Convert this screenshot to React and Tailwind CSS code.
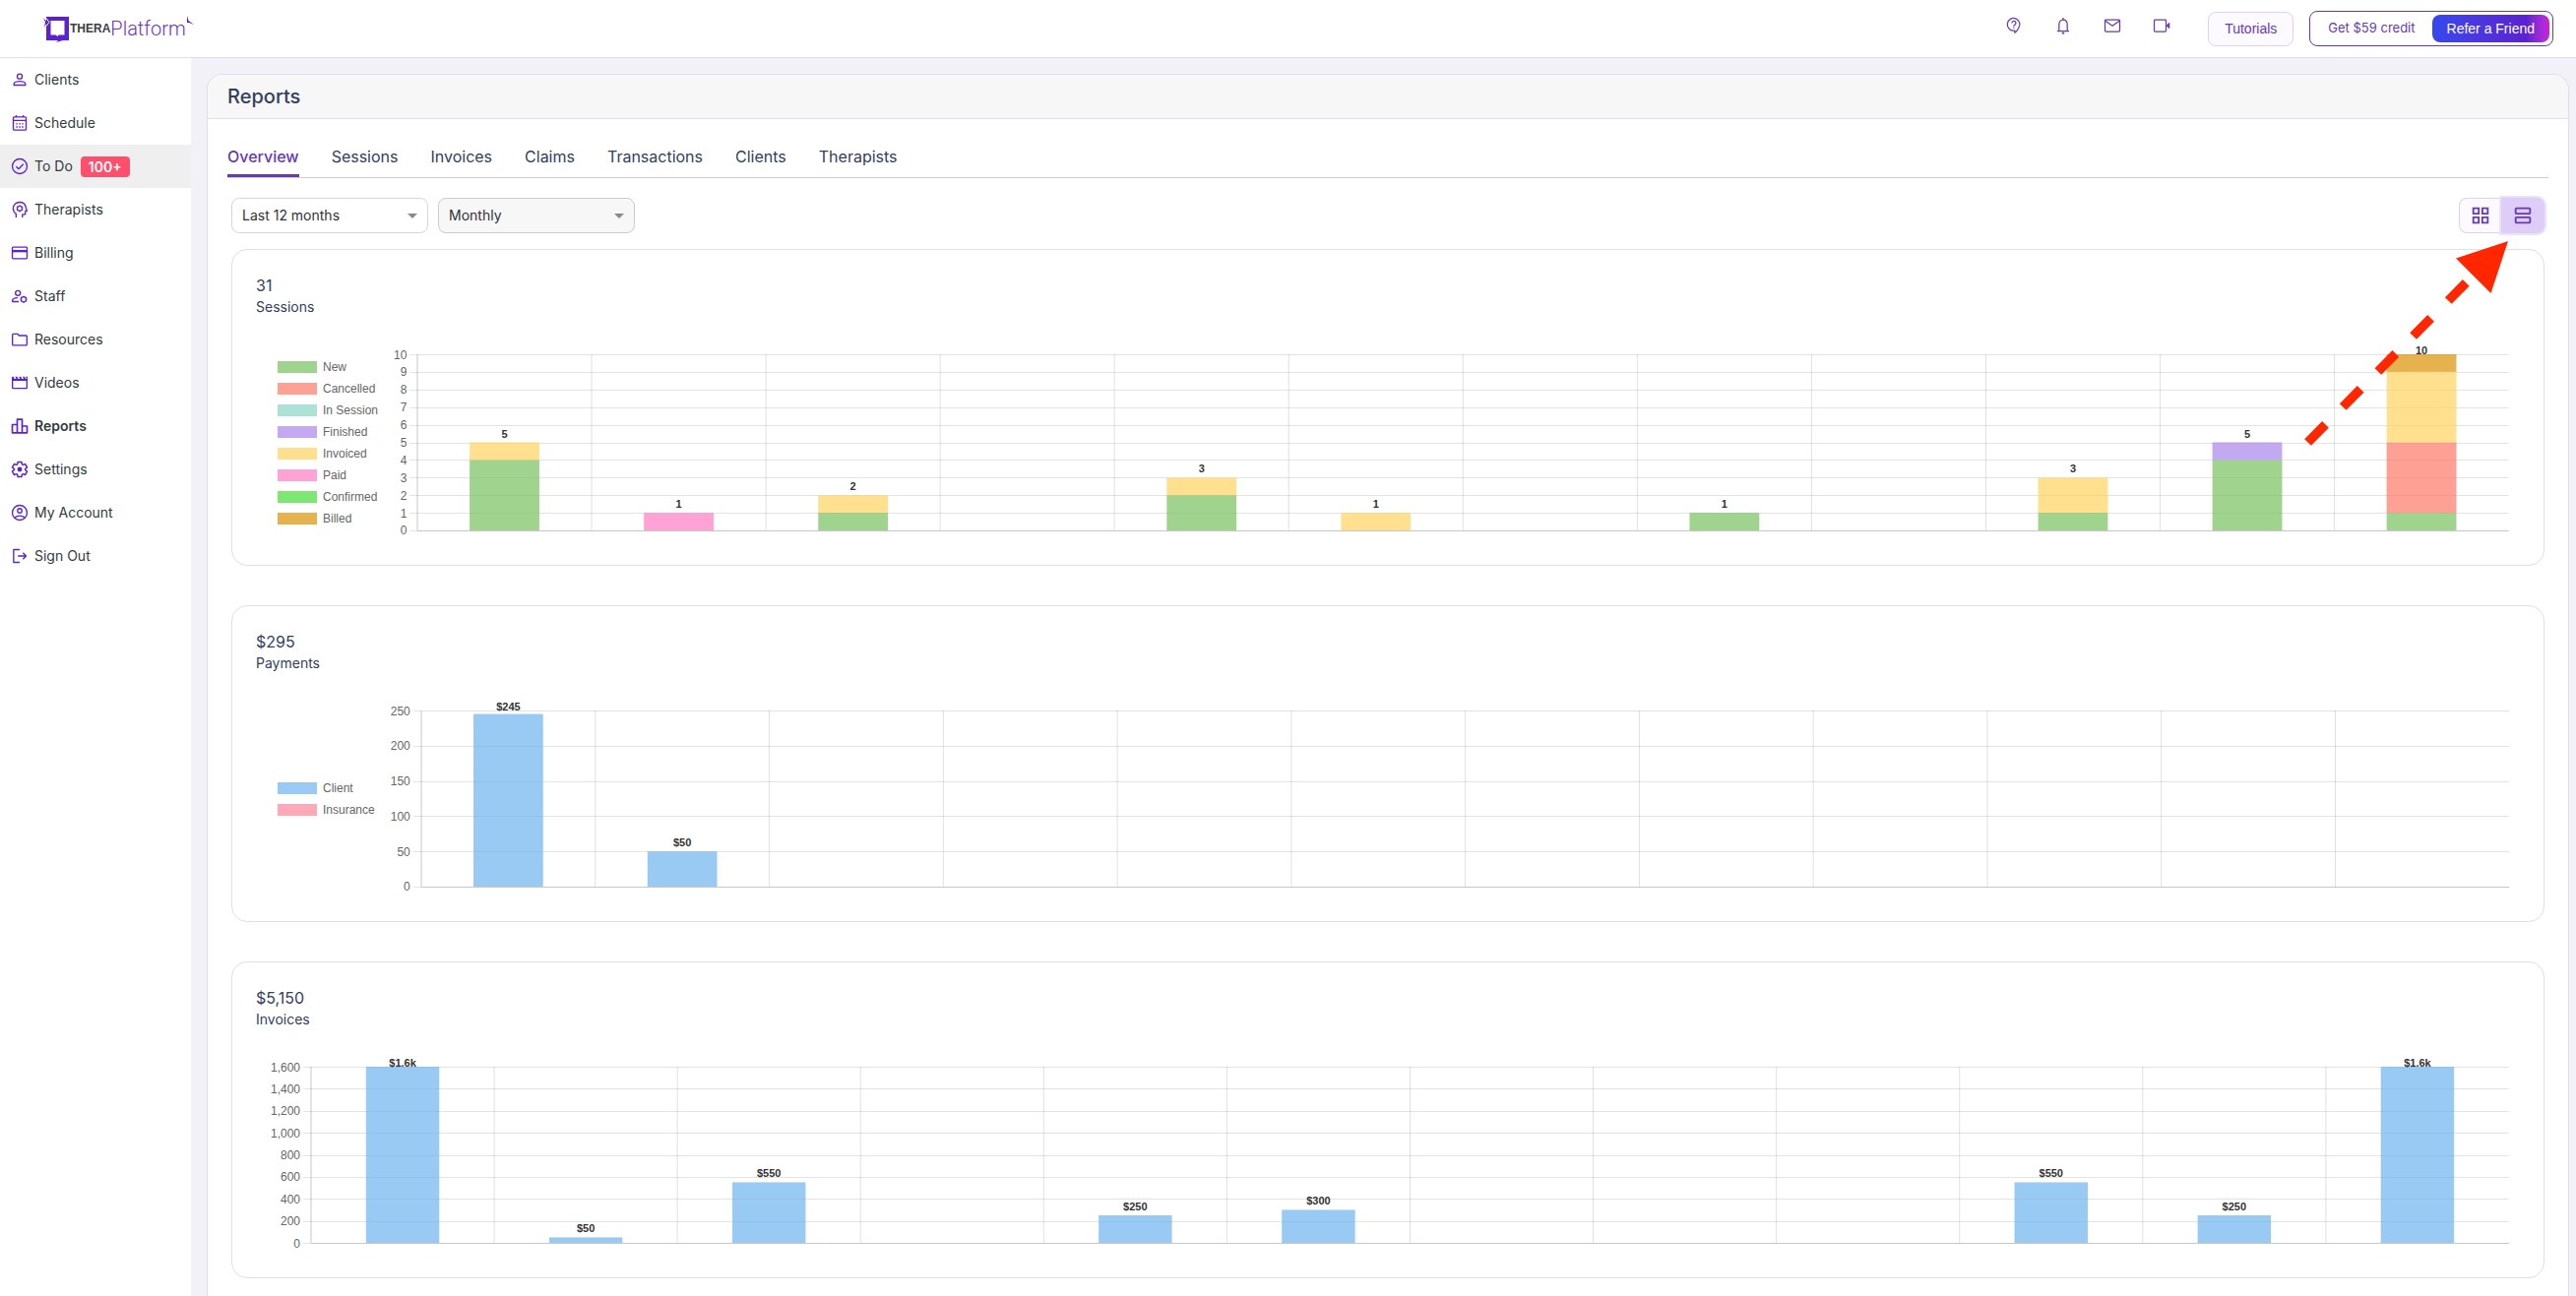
import { MdOutlineGridView, MdOutlineViewAgenda } from 'react-icons/md';

// Closed outline of a six-toothed cog
function cogPath(cx, cy, outer, inner) {
  const points = [];
  for (let tooth = 0; tooth < 6; tooth++) {
    const base = tooth * 60 - 90;
    [[-25, inner], [-14, outer], [14, outer], [25, inner]].forEach(([offset, radius]) => {
      const angle = ((base + offset) * Math.PI) / 180;
      points.push(`${(cx + radius * Math.cos(angle)).toFixed(2)} ${(cy + radius * Math.sin(angle)).toFixed(2)}`);
    });
  }
  return `M${points.join('L')}z`;
}

function LineIcon({ className, strokeWidth = 1.6, children }) {
  return (
    <svg
      className={className}
      viewBox="0 0 24 24"
      fill="none"
      stroke="currentColor"
      strokeWidth={strokeWidth}
      strokeLinejoin="round"
      aria-hidden="true"
    >
      {children}
    </svg>
  );
}

const icons = {
  clients: (
    <>
      <circle cx="12" cy="8" r="3" />
      <path d="M5 18.600v-1.400c0-1.900 3.600-3.200 7-3.200s7 1.300 7 3.200v1.400z" />
    </>
  ),
  schedule: (
    <>
      <rect x="4.200" y="4.600" width="15.600" height="16" rx="1" />
      <path d="M4.200 8.900h15.600M7.700 2.400v2.400M16.300 2.400v2.400" />
      <path d="M7.600 13h1.800M11.100 13h1.800M14.600 13h1.800M7.600 16.800h1.800M11.100 16.800h1.800M14.600 16.800h1.800" />
    </>
  ),
  todo: (
    <>
      <circle cx="12" cy="12" r="9" />
      <path d="M7.700 12.200l3 3 5.700-5.900" />
    </>
  ),
  therapists: (
    <>
      <path d="M7.600 21.600v-4.400C5.300 15.700 4 13.200 4 10.600A7.800 7.800 0 0 1 11.800 3c4 0 7 2.500 7.700 6l1.300 4.600h-1.900v4.200h-3.600v3.800" />
      <path d={cogPath(12, 10.6, 3.4, 2.6)} strokeWidth="1.400" />
    </>
  ),
  billing: (
    <>
      <rect x="3" y="5" width="18" height="14" rx="1" />
      <path d="M3 9.800h18" strokeWidth="2.800" />
    </>
  ),
  staff: (
    <>
      <circle cx="9.800" cy="8.200" r="3" />
      <path d="M10.800 18.600H3.200v-1.500c0-1.700 2.700-3 6.300-3.100" />
      <path d={cogPath(16.8, 15.8, 3.6, 2.7)} strokeWidth="1.500" />
    </>
  ),
  resources: <path d="M3.200 18V6.200q0-1 1-1h5l2 2h8.600q1 0 1 1V18q0 1-1 1H4.200q-1 0-1-1z" />,
  videos: (
    <>
      <path d="M3.200 8v10q0 .8.800.8h16q.8 0 .8-.8V8" />
      <path
        d="M2.400 9.600V5.400q0-1 1-1h.9l1.500 2.800h2L6.600 4.400h2.200l1.500 2.800h2l-1.200-2.800h2.200l1.500 2.800h2l-1.200-2.800h2.200l1.500 2.800h1.400L19.100 4.400h2.500v5.200z"
        fill="currentColor"
        stroke="none"
      />
    </>
  ),
  reports: <path d="M3 10.200h6v10H3zM9 3.800h6v16.400H9zM15 12h6v8.200h-6z" strokeWidth="2" />,
  settings: (
    <>
      <path d={cogPath(12, 12, 9.4, 6.8)} strokeWidth="1.800" />
      <circle cx="12" cy="12" r="2.900" fill="currentColor" stroke="none" />
    </>
  ),
  account: (
    <>
      <circle cx="12" cy="12" r="9" />
      <circle cx="12" cy="9.600" r="2.700" />
      <path d="M5.800 18.200c1.500-1.600 3.700-2.500 6.200-2.500s4.700.9 6.200 2.500" />
    </>
  ),
  signOut: <path d="M12 4.200H4.600v15.600H12M9.800 12h9.600M16 8.200l3.800 3.800-3.800 3.800" />,
  help: (
    <>
      <path d="M13 20.800v-2.700a7.600 7.600 0 1 1 4.300-2.500c-1 2.200-2.600 4-4.300 5.200z" />
      <path d="M9.500 8.900a2.400 2.400 0 1 1 3.800 1.900c-1 .7-1.500 1.100-1.500 2M11.800 13.900v1.500" />
    </>
  ),
  bell: (
    <>
      <path d="M4.800 18.800h14.400M7 18.800v-8.600c0-3 2-5.400 5-5.400s5 2.400 5 5.400v8.600" />
      <path d="M12 2.600v2M10.600 21.200h2.800" strokeWidth="2" />
    </>
  ),
  mail: (
    <>
      <rect x="3" y="5" width="18" height="14.200" rx="1" />
      <path d="M3.400 6.400L12 12.400l8.600-6" />
    </>
  ),
  video: (
    <>
      <rect x="3" y="5" width="14.400" height="14.200" rx="1" />
      <path d="M17.600 12l4-3.600v7.200z" fill="currentColor" strokeWidth="0.600" />
    </>
  )
};

const navItems = [
  { label: 'Clients', icon: 'clients' },
  { label: 'Schedule', icon: 'schedule' },
  { label: 'To Do', icon: 'todo', badge: '100+', highlighted: true },
  { label: 'Therapists', icon: 'therapists' },
  { label: 'Billing', icon: 'billing' },
  { label: 'Staff', icon: 'staff' },
  { label: 'Resources', icon: 'resources' },
  { label: 'Videos', icon: 'videos' },
  { label: 'Reports', icon: 'reports', current: true },
  { label: 'Settings', icon: 'settings' },
  { label: 'My Account', icon: 'account' },
  { label: 'Sign Out', icon: 'signOut' }
];

const headerIcons = [
  { label: 'Help', icon: 'help' },
  { label: 'Notifications', icon: 'bell' },
  { label: 'Messages', icon: 'mail' },
  { label: 'Video call', icon: 'video' }
];

const tabs = ['Overview', 'Sessions', 'Invoices', 'Claims', 'Transactions', 'Clients', 'Therapists'];

const NEW = 'rgba(119,192,94,0.7)';
const CANCELLED = 'rgba(255,119,102,0.7)';
const IN_SESSION = 'rgba(135,214,195,0.7)';
const FINISHED = 'rgba(169,132,235,0.7)';
const INVOICED = 'rgba(254,211,96,0.7)';
const PAID = 'rgba(255,124,196,0.7)';
const CONFIRMED = 'rgba(71,221,55,0.7)';
const BILLED = 'rgba(219,146,5,0.7)';
const CLIENT = 'rgba(108,179,238,0.7)';
const INSURANCE = 'rgba(255,131,154,0.7)';

// One entry per month, each a stack of [color, value] from the bottom up
const charts = [
  {
    total: '31',
    title: 'Sessions',
    max: 10,
    ticks: ['10', '9', '8', '7', '6', '5', '4', '3', '2', '1', '0'],
    legend: [
      ['New', NEW],
      ['Cancelled', CANCELLED],
      ['In Session', IN_SESSION],
      ['Finished', FINISHED],
      ['Invoiced', INVOICED],
      ['Paid', PAID],
      ['Confirmed', CONFIRMED],
      ['Billed', BILLED]
    ],
    months: [
      { label: '5', stack: [[NEW, 4], [INVOICED, 1]] },
      { label: '1', stack: [[PAID, 1]] },
      { label: '2', stack: [[NEW, 1], [INVOICED, 1]] },
      null,
      { label: '3', stack: [[NEW, 2], [INVOICED, 1]] },
      { label: '1', stack: [[INVOICED, 1]] },
      null,
      { label: '1', stack: [[NEW, 1]] },
      null,
      { label: '3', stack: [[NEW, 1], [INVOICED, 2]] },
      { label: '5', stack: [[NEW, 4], [FINISHED, 1]] },
      { label: '10', stack: [[NEW, 1], [CANCELLED, 4], [INVOICED, 4], [BILLED, 1]] }
    ]
  },
  {
    total: '$295',
    title: 'Payments',
    max: 250,
    ticks: ['250', '200', '150', '100', '50', '0'],
    legend: [
      ['Client', CLIENT],
      ['Insurance', INSURANCE]
    ],
    months: [
      { label: '$245', stack: [[CLIENT, 245]] },
      { label: '$50', stack: [[CLIENT, 50]] },
      null, null, null, null, null, null, null, null, null, null
    ]
  },
  {
    total: '$5,150',
    title: 'Invoices',
    max: 1600,
    ticks: ['1,600', '1,400', '1,200', '1,000', '800', '600', '400', '200', '0'],
    months: [
      { label: '$1.6k', stack: [[CLIENT, 1600]] },
      { label: '$50', stack: [[CLIENT, 50]] },
      { label: '$550', stack: [[CLIENT, 550]] },
      null,
      { label: '$250', stack: [[CLIENT, 250]] },
      { label: '$300', stack: [[CLIENT, 300]] },
      null, null, null,
      { label: '$550', stack: [[CLIENT, 550]] },
      { label: '$250', stack: [[CLIENT, 250]] },
      { label: '$1.6k', stack: [[CLIENT, 1600]] }
    ]
  }
];

const PLOT_HEIGHT = 179;

function Logo() {
  return (
    <a href="#home" className="flex items-center" aria-label="TheraPlatform">
      <svg className="h-7 w-[27px]" viewBox="0 0 27 28" fill="none">
        <path d="M3 2h23v24h-6l-7 2 2-2H3z" fill="#5b1fd6" />
        <path d="M7.500 6h14v14.500h-6l-1 1.500-2-1.500h-5z" fill="#fff" />
        <path d="M0 3l4 4.500L1 13l1-5.500z" fill="#5b1fd6" />
        <path d="M3 3.500l3 4-3 4" stroke="#fff" />
      </svg>
      <span className="font-['Liberation_Sans',sans-serif] text-[12px] font-bold text-[#3d3d3f]">THERA</span>
      <span className="font-[Roboto,sans-serif] text-[20px] font-light text-[#6a2fd8]">Platform</span>
      <svg className="-mt-4 h-3 w-2" viewBox="0 0 8 12">
        <path d="M1 1l1.500 5L8 10 3 8 1 8z" fill="#5b1fd6" />
      </svg>
    </a>
  );
}

function Header() {
  return (
    <header className="flex h-[59px] items-center justify-between border-b border-[#dfdcee] bg-white pl-11 pr-[23px]">
      <Logo />
      <div className="flex items-center">
        <div className="mr-[37px] flex gap-[30px] pb-1.5 text-[#673ab7]">
          {headerIcons.map(({ label, icon }) => (
            <button key={label} type="button" aria-label={label}>
              <LineIcon className="size-5" strokeWidth={1.5}>
                {icons[icon]}
              </LineIcon>
            </button>
          ))}
        </div>
        <button
          type="button"
          className="h-[35px] rounded-lg border border-[#e0d1f5] bg-[#fcf9ff] px-4 font-['Liberation_Sans',sans-serif] text-sm text-[#673ab7]"
        >
          Tutorials
        </button>
        <div className="ml-4 flex h-9 items-center rounded-lg border border-[#673ab7] pl-[18px] pr-[3px]">
          <span className="mr-[17px] text-[13px] text-[#673ab7]">Get $59 credit</span>
          <button
            type="button"
            className="h-7 rounded-lg bg-linear-to-r from-[#3547ee] via-[#5a21d2] via-80% to-[#cb20d8] px-[15px] font-['Liberation_Sans',sans-serif] text-sm text-white"
          >
            Refer a Friend
          </button>
        </div>
      </div>
    </header>
  );
}

function Sidebar() {
  return (
    <nav className="w-[194px] shrink-0 bg-white">
      <ul>
        {navItems.map(({ label, icon, badge, highlighted, current }) => (
          <li key={label}>
            <a
              href={`#${label.toLowerCase().replace(' ', '-')}`}
              aria-current={current ? 'page' : undefined}
              className={`flex h-11 items-center pl-2.5 text-sm text-[#333b3d] ${
                highlighted ? 'bg-[#efefef]' : ''
              } ${current ? 'font-semibold' : ''}`}
            >
              <LineIcon className="mr-[5px] size-5 text-[#5b21d6]">{icons[icon]}</LineIcon>
              {label}
              {badge && (
                <span className="ml-2 rounded bg-[#ff4f6d] px-2 text-sm leading-[21px] font-semibold text-white">
                  {badge}
                </span>
              )}
            </a>
          </li>
        ))}
      </ul>
    </nav>
  );
}

function Dropdown({ label, value, className }) {
  return (
    <div className="relative">
      <select
        aria-label={label}
        defaultValue={value}
        className={`h-9 w-[200px] appearance-none rounded-lg border pl-2.5 text-sm text-[#333] ${className}`}
      >
        <option>{value}</option>
      </select>
      <svg className="pointer-events-none absolute top-4 right-[11px] h-[5px] w-2.5" viewBox="0 0 10 5">
        <path d="M0 0h10L5 5z" fill="#8a8a8a" />
      </svg>
    </div>
  );
}

function Plot({ months, max, rows }) {
  return (
    <svg className="h-[180px] min-w-0 flex-1 overflow-visible">
      {rows.map((row, i) => {
        const y = Math.round((i * PLOT_HEIGHT) / (rows.length - 1)) + 0.5;
        const isZero = i === rows.length - 1;
        return (
          <g key={row}>
            <line x1="-8" x2="0" y1={y} y2={y} stroke="#000" strokeOpacity="0.1" />
            <line x1="0" x2="100%" y1={y} y2={y} stroke="#000" strokeOpacity={isZero ? 0.22 : 0.11} />
          </g>
        );
      })}
      {months.map((_, i) => (
        <line
          key={i}
          x1={`${(i * 100) / months.length}%`}
          x2={`${(i * 100) / months.length}%`}
          y1="0"
          y2={PLOT_HEIGHT}
          stroke="#000"
          strokeOpacity={i === 0 ? 0.22 : 0.12}
        />
      ))}
      {months.map((month, i) => {
        if (!month) return null;
        const slot = 100 / months.length;
        let top = PLOT_HEIGHT;
        const bars = month.stack.map(([color, value]) => {
          const height = (value / max) * PLOT_HEIGHT;
          top -= height;
          return (
            <rect key={color} x={`${(i + 0.3) * slot}%`} width={`${0.4 * slot}%`} y={top} height={height} fill={color} />
          );
        });
        return (
          <g key={i}>
            {bars}
            <text
              x={`${(i + 0.5) * slot}%`}
              y={Math.max(top - 5, 0)}
              textAnchor="middle"
              className="fill-[#333] font-['Liberation_Sans',sans-serif] text-[11px] font-bold"
            >
              {month.label}
            </text>
          </g>
        );
      })}
    </svg>
  );
}

function ChartCard({ total, title, max, ticks, legend, months, children }) {
  return (
    <section className="relative rounded-2xl border border-[#dddfeb] bg-white pt-[25px] pr-[35px] pb-[34px] pl-[39px]">
      <div className="-ml-[15px] text-[#32405f]">
        <p className="text-base leading-[22px]">{total}</p>
        <h2 className="text-sm leading-[22px]">{title}</h2>
      </div>
      <div className="mt-[37px] flex items-center font-['Liberation_Sans',sans-serif] text-xs text-[#666]">
        {legend && (
          <ul className="mr-4 flex flex-col gap-2.5 pl-[7px]">
            {legend.map(([name, color]) => (
              <li key={name} className="flex h-3 items-center gap-1.5">
                <span className="h-3 w-10" style={{ backgroundColor: color }} />
                {name}
              </li>
            ))}
          </ul>
        )}
        <div className="mr-[11px] -my-1.5 flex h-[191px] flex-col justify-between text-right leading-3">
          {ticks.map((tick) => (
            <span key={tick}>{tick}</span>
          ))}
        </div>
        <Plot months={months} max={max} rows={ticks} />
      </div>
      {children}
    </section>
  );
}

// Callout arrow that points at the list view toggle
function CalloutArrow() {
  return (
    <svg className="pointer-events-none absolute -top-2.5 right-[35px] h-[211px] w-[210px]" viewBox="0 0 210 211">
      <path d="M5.500 205.500L177 32.500" stroke="#ff2600" strokeWidth="9.500" strokeDasharray="25.500 25.200" fill="none" />
      <path d="M209 1L156 18.500 191.500 54z" fill="#ff2600" />
    </svg>
  );
}

export default function App() {
  return (
    <div className="flex min-h-screen flex-col bg-[#f2f1f8] font-[Inter,sans-serif]">
      <Header />
      <div className="flex flex-1">
        <Sidebar />
        <main className="flex min-w-0 flex-1 flex-col pt-4 pr-[7px] pl-4">
          <div className="flex-1 rounded-t-2xl border border-b-0 border-[#dddfeb] bg-white">
            <h1 className="h-[45px] rounded-t-2xl border-b border-[#dddfeb] bg-[#f7f7f7] pl-5 text-xl leading-[45px] font-medium text-[#32405f]">
              Reports
            </h1>
            <div className="px-5 pt-5 pb-[18px]">
              <div role="tablist" className="flex gap-[33px] border-b border-[#ccc] text-base leading-9 text-[#32405f]">
                {tabs.map((tab, i) => (
                  <button
                    key={tab}
                    type="button"
                    role="tab"
                    aria-selected={i === 0}
                    className={`border-b-3 ${
                      i === 0 ? 'border-[#673ab7] font-medium text-[#673ab7]' : 'border-transparent'
                    }`}
                  >
                    {tab}
                  </button>
                ))}
              </div>
              <div className="px-1">
                <div className="mt-5 mb-4 flex items-center gap-2.5">
                  <Dropdown label="Period" value="Last 12 months" className="border-[#d6d6d6] bg-white" />
                  <Dropdown label="Grouping" value="Monthly" className="border-[#ccc] bg-[#f7f7f7]" />
                  <div className="ml-auto flex h-9 text-[#673ab7]">
                    <button
                      type="button"
                      aria-label="Grid view"
                      className="flex w-[43px] items-center justify-center rounded-l-lg border border-r-0 border-[#e0d1f5] bg-[#fcf9ff]"
                    >
                      <MdOutlineGridView className="size-[22px]" />
                    </button>
                    <button
                      type="button"
                      aria-label="List view"
                      aria-pressed="true"
                      className="flex w-11 items-center justify-center rounded-r-lg bg-[#decdf7] ring-2 ring-[#ebe1fa]"
                    >
                      <MdOutlineViewAgenda className="size-[22px]" />
                    </button>
                  </div>
                </div>
                <div className="flex flex-col gap-10">
                  {charts.map((chart, i) => (
                    <ChartCard key={chart.title} {...chart}>
                      {i === 0 && <CalloutArrow />}
                    </ChartCard>
                  ))}
                </div>
              </div>
            </div>
          </div>
        </main>
      </div>
    </div>
  );
}
